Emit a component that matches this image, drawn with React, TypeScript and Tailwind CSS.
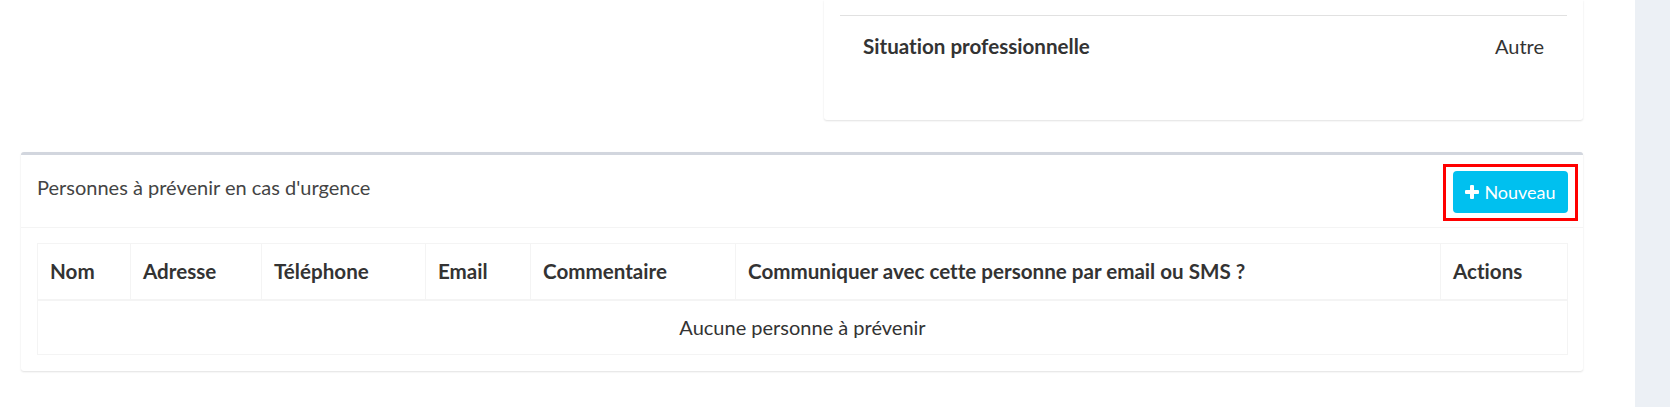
import React from 'react';

const columns = [
    {label: 'Nom', width: 'w-[93px]'},
    {label: 'Adresse', width: 'w-[131px]'},
    {label: 'Téléphone', width: 'w-[164px]'},
    {label: 'Email', width: 'w-[105px]'},
    {label: 'Commentaire', width: 'w-[205px]'},
    {label: 'Communiquer avec cette personne par email ou SMS ?', width: 'w-[705px]'},
    {label: 'Actions', width: 'w-[127px]'},
];

function PlusIcon() {
    return (
        <svg width="14" height="14" viewBox="0 0 14 14" className="shrink-0">
            <rect x="5" y="0" width="4" height="14" rx="1" fill="white" />
            <rect x="0" y="5" width="14" height="4" rx="1" fill="white" />
        </svg>
    );
}

function InfoCard() {
    return (
        <div className="flex justify-end">
            <div className="w-[759px] bg-white rounded-b-[3px] shadow-[0_1px_2px_rgba(0,0,0,0.12)] px-4 pb-[62px]">
                <div className="h-[15px]" />
                <div className="border-t border-[#e1e1e1] flex items-center justify-between px-[23px] pt-[18px] text-[20px] leading-[24px] text-[#333]">
                    <span className="font-bold text-[20.6px]">Situation professionnelle</span>
                    <span>Autre</span>
                </div>
            </div>
        </div>
    );
}

function EmergencyContacts() {
    return (
        <div className="bg-white rounded-[3px] border-t-[3px] border-[#d2d6de] shadow-[0_1px_2px_rgba(0,0,0,0.12)]">
            <div className="flex items-start justify-between border-b border-[#f4f4f4] pl-4 pr-[5px] pt-[9px] pb-[6px]">
                <h3 className="mt-[12px] text-[20px] leading-[22px] text-[#444]">Personnes à prévenir en cas d'urgence</h3>
                <div className="border-[3px] border-[#ff0000] px-[7px] pt-[4px] pb-[5px]">
                    <button className="flex items-center gap-[5px] w-[115px] h-[42px] justify-center rounded-[4px] bg-[#00c0ef] text-white text-[18px]">
                        <PlusIcon />
                        <span>Nouveau</span>
                    </button>
                </div>
            </div>
            <div className="px-4 pt-[15px] pb-4">
                <table className="w-full table-fixed border-collapse text-[20px] text-[#333]">
                    <thead>
                        <tr>
                            {columns.map(col => (
                                <th key={col.label}
                                    className={`${col.width} h-[56px] border border-[#f4f4f4] border-b-2 px-[12px] text-left text-[20.6px] font-bold`}>
                                    {col.label}
                                </th>
                            ))}
                        </tr>
                    </thead>
                    <tbody>
                        <tr>
                            <td colSpan={7} className="h-[55px] border border-[#f4f4f4] text-center">
                                Aucune personne à prévenir
                            </td>
                        </tr>
                    </tbody>
                </table>
            </div>
        </div>
    );
}

export default function App() {
    return (
        <div className="flex w-[1670px] h-[407px] overflow-hidden bg-white font-['Lato',sans-serif] [font-variant-ligatures:none]">
            <main className="w-[1635px] pl-[21px] pr-[52px]">
                <InfoCard />
                <div className="mt-[32px]">
                    <EmergencyContacts />
                </div>
            </main>
            <aside className="flex-1 bg-[#ecf0f5]" />
        </div>
    );
}
